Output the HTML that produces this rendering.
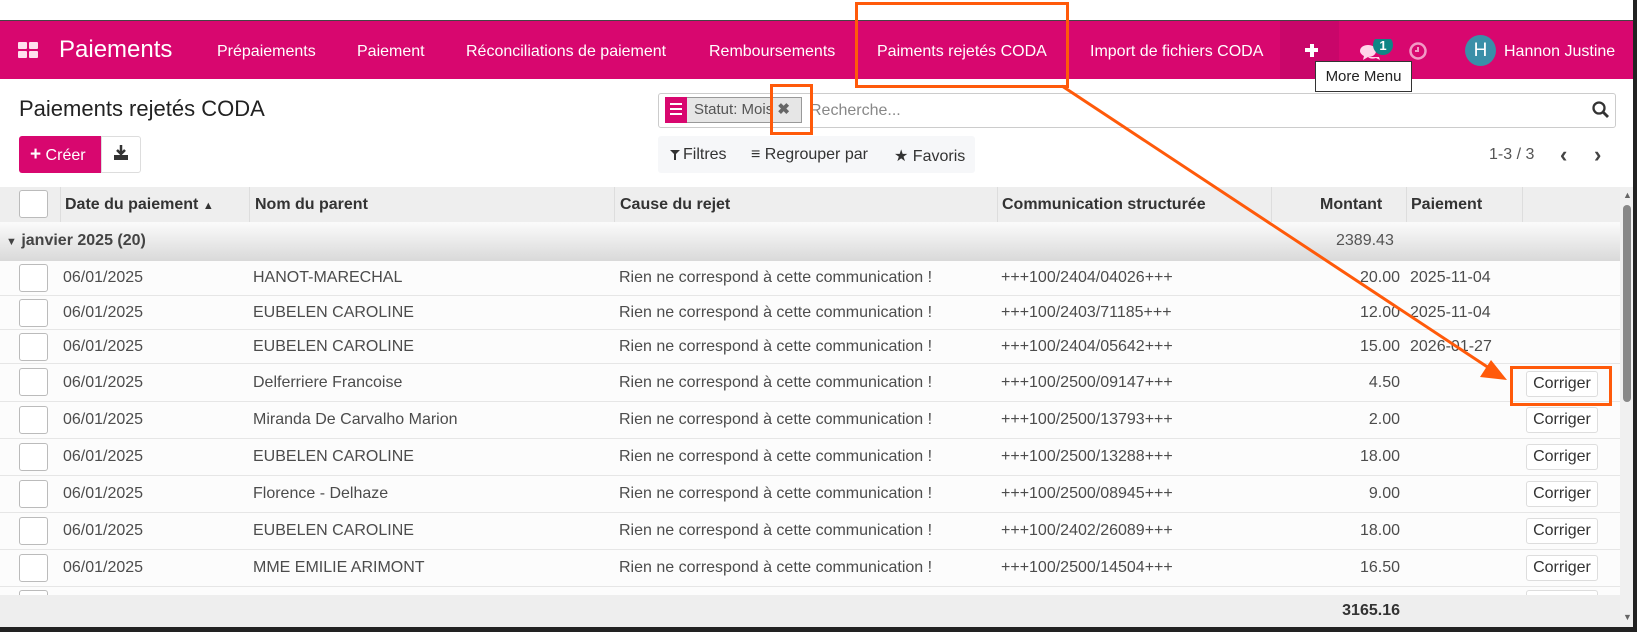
<!DOCTYPE html>
<html><head><meta charset="utf-8"><style>
*{margin:0;padding:0;box-sizing:border-box}
body{width:1637px;height:632px;overflow:hidden;background:#222;font-family:"Liberation Sans",sans-serif;position:relative;color:#4c4c4c}
.abs{position:absolute}
#page{position:absolute;left:0;top:0;width:1633px;height:627px;background:#fff;overflow:hidden}
#top{position:absolute;left:0;top:0;width:1637px;height:20px;background:#fff}
#nav{position:absolute;left:0;top:20px;width:1633px;height:59px;background:#d8076f;border-top:1px solid #444;color:#fff}
#nav .it{position:absolute;top:22px;font-size:16px;white-space:nowrap}
.row{position:absolute;left:0;width:1620px;border-bottom:1px solid #e6e6e6;background:#fcfcfc;font-size:16px}
.row span{position:absolute;white-space:nowrap}
.cb{position:absolute;left:19px;width:29px;height:28px;border:1px solid #bbb;border-radius:3px;background:#fff}
.btn{position:absolute;left:1526px;width:72px;height:26px;border:1px solid #ddd;border-radius:3px;background:#fff;color:#333;font-size:16px;text-align:center;line-height:24px}
.th{position:absolute;top:9px;font-weight:bold;font-size:16px;color:#333;white-space:nowrap}
.sep{position:absolute;top:0;width:1px;height:35px;background:#ddd}
</style></head><body>
<div id="page">
<div id="top"></div>
<div id="nav">
 <div class="abs" style="left:18px;top:21px;width:9px;height:7px;background:#ffe0ee;border-radius:1px"></div>
 <div class="abs" style="left:29px;top:21px;width:9px;height:7px;background:#ffe0ee;border-radius:1px"></div>
 <div class="abs" style="left:18px;top:30px;width:9px;height:7px;background:#ffe0ee;border-radius:1px"></div>
 <div class="abs" style="left:29px;top:30px;width:9px;height:7px;background:#ffe0ee;border-radius:1px"></div>
 <div class="it" style="left:59px;top:15px;font-size:24px">Paiements</div>
 <div class="it" style="left:217px">Prépaiements</div>
 <div class="it" style="left:357px">Paiement</div>
 <div class="it" style="left:466px">Réconciliations de paiement</div>
 <div class="it" style="left:709px">Remboursements</div>
 <div class="it" style="left:877px">Paiments rejetés CODA</div>
 <div class="it" style="left:1090px">Import de fichiers CODA</div>
 <div class="abs" style="left:1280px;top:0;width:59px;height:58px;background:#c9066a"></div>
 <div class="abs" style="left:1305px;top:27px;width:13px;height:4px;background:#fff"></div>
 <div class="abs" style="left:1309.5px;top:22.5px;width:4px;height:13px;background:#fff"></div>
 <svg class="abs" style="left:1356px;top:18px" width="40" height="24"><path d="M4 12c0-4 4-6 8-6s8 2 8 6-4 6-8 6l-5 3 1-4c-2-1-4-3-4-5z" fill="#ffd6ea"/><path d="M12 18c2 2 5 2 8 1l4 2-1-3" fill="#ffd6ea"/><circle cx="27" cy="6" r="10" fill="#0f8585"/><text x="27" y="11" font-size="13" font-weight="bold" fill="#fff" text-anchor="middle" font-family="Liberation Sans">1</text></svg>
 <svg class="abs" style="left:1409px;top:21px" width="18" height="18"><circle cx="9" cy="9" r="7.5" fill="none" stroke="#f29ac6" stroke-width="2.5"/><path d="M9 5v4h-3" stroke="#f29ac6" stroke-width="2" fill="none"/></svg>
 <div class="abs" style="left:1465px;top:14px;width:31px;height:31px;border-radius:50%;background:#3a8fa8;text-align:center;line-height:31px;font-size:19px">H</div>
 <div class="it" style="left:1504px">Hannon Justine</div>
</div>
<div class="abs" style="left:1315px;top:61px;width:97px;height:31px;background:#fff;border:1px solid #333;font-size:15px;line-height:29px;text-align:center;color:#222">More Menu</div>

<div class="abs" style="left:19px;top:96px;font-size:22px;color:#222">Paiements rejetés CODA</div>
<div class="abs" style="left:658px;top:93px;width:958px;height:35px;border:1px solid #ccc;border-radius:3px"></div>
<div class="abs" style="left:665px;top:97px;width:22px;height:26px;background:#d8076f"></div>
<div class="abs" style="left:670px;top:103px;width:12px;height:2px;background:#fff;box-shadow:0 5px 0 #fff,0 10px 0 #fff"></div>
<div class="abs" style="left:687px;top:97px;width:115px;height:26px;background:#e6e6e6;border:1px solid #999;border-left:none;font-size:15px;line-height:24px;padding-left:7px;color:#555">Statut: Mois <b style="color:#666">✖</b></div>
<div class="abs" style="left:810px;top:102px;font-size:16px;color:#888">Recherche...</div>
<svg class="abs" style="left:1592px;top:101px" width="18" height="18"><circle cx="7" cy="7" r="5.5" fill="none" stroke="#333" stroke-width="2.3"/><path d="M11 11l5 5" stroke="#333" stroke-width="2.8"/></svg>

<div class="abs" style="left:19px;top:136px;width:82px;height:37px;background:#d8076f;border-radius:3px 0 0 3px;color:#fff;font-size:16px;line-height:37px;padding-left:11px"><b style="font-size:19px">+</b> Créer</div>
<div class="abs" style="left:101px;top:136px;width:40px;height:37px;border:1px solid #ddd;border-radius:0 3px 3px 0"></div>
<svg class="abs" style="left:112px;top:144px" width="18" height="18"><path d="M9 1v9M5 6l4 4 4-4" stroke="#333" stroke-width="2.5" fill="none"/><path d="M2 11h14v5H2z" fill="#333"/></svg>
<div class="abs" style="left:658px;top:136px;width:317px;height:37px;background:#f6f7f9;border-radius:3px"></div>
<svg class="abs" style="left:670px;top:149px" width="10" height="12"><path d="M0 1h10L6 5v6H4V5z" fill="#333"/></svg>
<div class="abs" style="left:683px;top:146px;font-size:16px;color:#333;white-space:nowrap">Filtres</div>
<div class="abs" style="left:751px;top:146px;font-size:16px;color:#333;white-space:nowrap">≡ Regrouper par</div>
<div class="abs" style="left:894px;top:146px;font-size:16px;color:#333;white-space:nowrap">★ Favoris</div>
<div class="abs" style="left:1489px;top:146px;font-size:16px;color:#555">1-3 / 3</div>
<div class="abs" style="left:1560px;top:142px;font-size:22px;color:#444;font-weight:bold">‹</div>
<div class="abs" style="left:1594px;top:142px;font-size:22px;color:#444;font-weight:bold">›</div>

<div class="abs" style="left:0;top:187px;width:1620px;height:35px;background:#eee">
 <div class="cb" style="top:3px"></div>
 <div class="sep" style="left:60px"></div><div class="sep" style="left:249px"></div><div class="sep" style="left:614px"></div><div class="sep" style="left:997px"></div><div class="sep" style="left:1271px"></div><div class="sep" style="left:1406px"></div><div class="sep" style="left:1522px"></div>
 <div class="th" style="left:65px">Date du paiement <span style="font-size:11px">▲</span></div>
 <div class="th" style="left:255px">Nom du parent</div>
 <div class="th" style="left:620px">Cause du rejet</div>
 <div class="th" style="left:1002px">Communication structurée</div>
 <div class="th" style="left:1320px">Montant</div>
 <div class="th" style="left:1411px">Paiement</div>
</div>
<div class="abs" style="left:0;top:222px;width:1620px;height:39px;background:linear-gradient(#fbfbfb,#d9d9d9);font-size:16px">
 <span class="abs" style="left:6px;top:10px;font-weight:bold;color:#444"><span style="font-size:11px">▼</span> janvier 2025 (20)</span>
 <span class="abs" style="left:1336px;top:10px;color:#555">2389.43</span>
</div>

<div class="row" style="top:261px;height:35px"><div class="cb" style="top:3px"></div><span style="left:63px;top:8px">06/01/2025</span><span style="left:253px;top:8px">HANOT-MARECHAL</span><span style="left:619px;top:8px">Rien ne correspond à cette communication !</span><span style="left:1001px;top:8px">+++100/2404/04026+++</span><span style="right:220px;top:8px">20.00</span><span style="left:1410px;top:8px">2025-11-04</span></div>
<div class="row" style="top:296px;height:34px"><div class="cb" style="top:3px"></div><span style="left:63px;top:8px">06/01/2025</span><span style="left:253px;top:8px">EUBELEN CAROLINE</span><span style="left:619px;top:8px">Rien ne correspond à cette communication !</span><span style="left:1001px;top:8px">+++100/2403/71185+++</span><span style="right:220px;top:8px">12.00</span><span style="left:1410px;top:8px">2025-11-04</span></div>
<div class="row" style="top:330px;height:34px"><div class="cb" style="top:3px"></div><span style="left:63px;top:8px">06/01/2025</span><span style="left:253px;top:8px">EUBELEN CAROLINE</span><span style="left:619px;top:8px">Rien ne correspond à cette communication !</span><span style="left:1001px;top:8px">+++100/2404/05642+++</span><span style="right:220px;top:8px">15.00</span><span style="left:1410px;top:8px">2026-01-27</span></div>
<div class="row" style="top:364px;height:38px"><div class="cb" style="top:4px"></div><span style="left:63px;top:10px">06/01/2025</span><span style="left:253px;top:10px">Delferriere Francoise</span><span style="left:619px;top:10px">Rien ne correspond à cette communication !</span><span style="left:1001px;top:10px">+++100/2500/09147+++</span><span style="right:220px;top:10px">4.50</span><div class="btn" style="top:7px">Corriger</div></div>
<div class="row" style="top:402px;height:37px"><div class="cb" style="top:4px"></div><span style="left:63px;top:9px">06/01/2025</span><span style="left:253px;top:9px">Miranda De Carvalho Marion</span><span style="left:619px;top:9px">Rien ne correspond à cette communication !</span><span style="left:1001px;top:9px">+++100/2500/13793+++</span><span style="right:220px;top:9px">2.00</span><div class="btn" style="top:5px">Corriger</div></div>
<div class="row" style="top:439px;height:37px"><div class="cb" style="top:4px"></div><span style="left:63px;top:9px">06/01/2025</span><span style="left:253px;top:9px">EUBELEN CAROLINE</span><span style="left:619px;top:9px">Rien ne correspond à cette communication !</span><span style="left:1001px;top:9px">+++100/2500/13288+++</span><span style="right:220px;top:9px">18.00</span><div class="btn" style="top:5px">Corriger</div></div>
<div class="row" style="top:476px;height:37px"><div class="cb" style="top:4px"></div><span style="left:63px;top:9px">06/01/2025</span><span style="left:253px;top:9px">Florence - Delhaze</span><span style="left:619px;top:9px">Rien ne correspond à cette communication !</span><span style="left:1001px;top:9px">+++100/2500/08945+++</span><span style="right:220px;top:9px">9.00</span><div class="btn" style="top:5px">Corriger</div></div>
<div class="row" style="top:513px;height:37px"><div class="cb" style="top:4px"></div><span style="left:63px;top:9px">06/01/2025</span><span style="left:253px;top:9px">EUBELEN CAROLINE</span><span style="left:619px;top:9px">Rien ne correspond à cette communication !</span><span style="left:1001px;top:9px">+++100/2402/26089+++</span><span style="right:220px;top:9px">18.00</span><div class="btn" style="top:5px">Corriger</div></div>
<div class="row" style="top:550px;height:37px"><div class="cb" style="top:4px"></div><span style="left:63px;top:9px">06/01/2025</span><span style="left:253px;top:9px">MME EMILIE ARIMONT</span><span style="left:619px;top:9px">Rien ne correspond à cette communication !</span><span style="left:1001px;top:9px">+++100/2500/14504+++</span><span style="right:220px;top:9px">16.50</span><div class="btn" style="top:5px">Corriger</div></div>
<div class="row" style="top:587px;height:37px"><div class="cb" style="top:3px"></div><div class="btn" style="top:3px"></div></div>
<div class="abs" style="left:0;top:595px;width:1620px;height:32px;background:#eee"><span class="abs" style="right:220px;top:7px;font-weight:bold;font-size:16px;color:#333">3165.16</span></div>

<div class="abs" style="left:1620px;top:187px;width:13px;height:440px;background:#f0f0f0"></div>
<div class="abs" style="left:1623px;top:190px;font-size:9px;color:#666">▲</div>
<div class="abs" style="left:1623px;top:205px;width:8px;height:197px;background:#888;border-radius:4px"></div>
<div class="abs" style="left:1623px;top:612px;font-size:9px;color:#666">▼</div>

<div class="abs" style="left:855px;top:2px;width:214px;height:86px;border:3px solid #ff5a0a"></div>
<div class="abs" style="left:770px;top:84px;width:43px;height:51px;border:3px solid #ff5a0a"></div>
<div class="abs" style="left:1510px;top:366px;width:102px;height:40px;border:3px solid #ff5a0a"></div>
<svg class="abs" style="left:0;top:0" width="1637" height="632"><line x1="1062" y1="86" x2="1492" y2="370" stroke="#ff5a0a" stroke-width="3"/><path d="M1507 380l-27-3 11-17z" fill="#ff5a0a"/></svg>
</div>
</body></html>
